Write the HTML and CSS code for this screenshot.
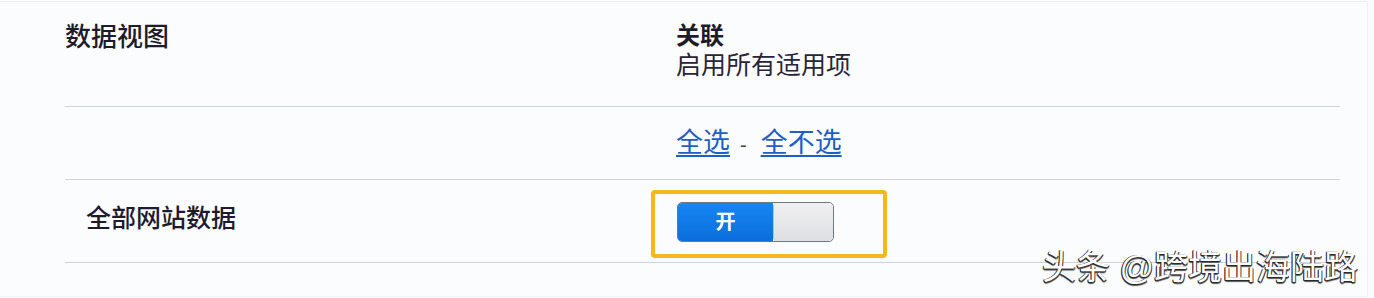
FILE: index.html
```html
<!DOCTYPE html>
<html lang="zh-CN">
<head>
<meta charset="utf-8">
<title>数据视图</title>
<link rel="stylesheet" href="styles.css">
</head>
<body>
<div class="frame">
  <div class="panel">
    <div class="row row-head">
      <div class="col-label"><span class="title">数据视图</span></div>
      <div class="col-value">
        <div class="head-strong">关联</div>
        <div class="head-sub">启用所有适用项</div>
      </div>
    </div>
    <div class="row row-links">
      <div class="col-label"></div>
      <div class="col-value">
        <a class="link" href="#">全选</a><span class="sep">-</span><a class="link" href="#">全不选</a>
      </div>
    </div>
    <div class="row row-toggle">
      <div class="col-label"><span class="item-label">全部网站数据</span></div>
      <div class="col-value">
        <div class="toggle-wrap">
          <div class="toggle">
            <span class="toggle-on">开</span>
            <span class="toggle-knob"></span>
          </div>
        </div>
      </div>
    </div>
  </div>
  <div class="watermark">头条 @跨境出海陆路</div>
</div>
</body>
</html>
```
FILE: styles.css
```css
html, body {
  margin: 0;
  padding: 0;
  background: #fbfcfe;
}
body {
  font-family: "Liberation Sans", "Noto Sans CJK SC", sans-serif;
  color: #1d1b2c;
  width: 1374px;
  height: 298px;
  overflow: hidden;
}
.frame {
  position: relative;
  box-sizing: border-box;
  width: 1368px;
  height: 296px;
  margin-top: 1px;
  border-top: 1px solid #eef0f3;
  border-right: 1px solid #eef0f3;
  border-bottom: 1px solid #eef0f3;
}
.panel {
  margin-left: 65px;
  width: 1275px;
}
.row {
  display: flex;
  border-bottom: 1px solid #cdd5dc;
}
.col-label {
  width: 611px;
  flex: none;
}
.col-value {
  flex: 1;
}
.row-head {
  height: 105px;
  box-sizing: border-box;
  padding-top: 19px;
}
.title {
  display: inline-block;
  font-size: 26px;
  line-height: 34px;
  font-weight: 500;
  margin-top: -1px;
}
.head-strong {
  font-size: 24px;
  line-height: 29px;
  font-weight: 700;
}
.head-sub {
  font-size: 25px;
  line-height: 30px;
  font-weight: 400;
  color: #2a2438;
}
.row-links {
  height: 72px;
  align-items: center;
}
.link {
  font-size: 27px;
  line-height: 30px;
  color: #1f5fc4;
  text-decoration: underline;
  text-underline-offset: 3px;
}
.sep {
  font-size: 20px;
  color: #444;
  padding: 0 14px 0 10px;
}
.row-toggle {
  height: 82px;
  align-items: center;
}
.item-label {
  display: inline-block;
  margin-left: 21px;
  margin-top: -6px;
  font-size: 25px;
  line-height: 30px;
  font-weight: 500;
}
.toggle-wrap {
  position: relative;
  width: 157px;
  height: 40px;
  margin-left: 1px;
  margin-top: 1px;
}
.toggle-wrap::before {
  content: "";
  position: absolute;
  left: -26px;
  top: -12px;
  right: -53px;
  bottom: -16px;
  border: 4px solid #f6b81a;
  border-radius: 4px;
  box-sizing: border-box;
}
.toggle {
  display: flex;
  width: 157px;
  height: 40px;
  border-radius: 5px;
  overflow: hidden;
  box-sizing: border-box;
  border: 1px solid #6f7780;
}
.toggle-on {
  width: 95px;
  flex: none;
  background: linear-gradient(#1785f2, #0b6fdc);
  color: #fff;
  font-size: 20px;
  font-weight: 700;
  display: flex;
  align-items: center;
  justify-content: center;
  padding-bottom: 3px;
}
.toggle-knob {
  flex: 1;
  background: linear-gradient(#f0f0f2, #dedfe2);
  border-left: 1px solid #b9c3cf;
  border-radius: 4px;
}
.watermark {
  position: absolute;
  left: 1042px;
  top: 244px;
  font-size: 34px;
  line-height: 42px;
  color: #ffffff;
  font-weight: 400;
  text-shadow: -1px 1px 0 #2a2a2a, 1px 1px 0 #444, -1px 0 0 #333, 0 2px 1px #555;
  white-space: nowrap;
}
```
